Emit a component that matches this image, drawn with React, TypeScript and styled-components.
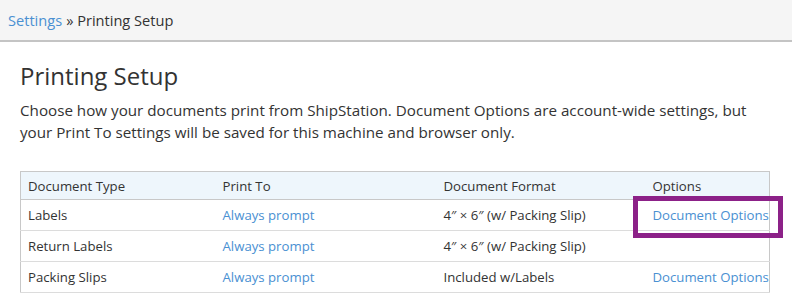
import styled, { createGlobalStyle } from 'styled-components';

const GlobalStyle = createGlobalStyle`
  body {
    margin: 0;
    background: #fff;
    font-family: "Open Sans", Lato, Arial, sans-serif;
    color: #333;
  }
`;

const rows = [
  { type: 'Labels', printTo: 'Always prompt', format: '4″ × 6″ (w/ Packing Slip)', options: true, highlight: true },
  { type: 'Return Labels', printTo: 'Always prompt', format: '4″ × 6″ (w/ Packing Slip)', options: false, highlight: false },
  { type: 'Packing Slips', printTo: 'Always prompt', format: 'Included w/Labels', options: true, highlight: false },
];

const App = () => {
  return (
    <Page>
      <GlobalStyle />
      <Breadcrumb>
        <Link href="#">Settings</Link>
        <Crumb>» Printing Setup</Crumb>
      </Breadcrumb>
      <Content>
        <Title>Printing Setup</Title>
        <Intro>
          Choose how your documents print from ShipStation. Document Options are account-wide settings, but
          your Print To settings will be saved for this machine and browser only.
        </Intro>
        <Table>
          <colgroup>
            <col style={{ width: 195 }} />
            <col style={{ width: 221 }} />
            <col style={{ width: 209 }} />
            <col style={{ width: 124 }} />
          </colgroup>
          <thead>
            <tr>
              <HeadCell>Document Type</HeadCell>
              <HeadCell>Print To</HeadCell>
              <HeadCell>Document Format</HeadCell>
              <HeadCell>Options</HeadCell>
            </tr>
          </thead>
          <tbody>
            {rows.map((r) => (
              <tr key={r.type}>
                <Cell>{r.type}</Cell>
                <Cell>
                  <Link href="#">{r.printTo}</Link>
                </Cell>
                <Cell>{r.format}</Cell>
                <Cell $marked={r.highlight}>
                  {r.options && <Link href="#">Document Options</Link>}
                  {r.highlight && <Highlight />}
                </Cell>
              </tr>
            ))}
          </tbody>
        </Table>
      </Content>
    </Page>
  );
};

export default App;

const Page = styled.div`
  width: 792px;
  height: 293px;
  overflow: hidden;
`;

const Breadcrumb = styled.div`
  height: 42px;
  box-sizing: border-box;
  padding: 0 8px;
  display: flex;
  align-items: center;
  gap: 4px;
  background: #f5f5f5;
  border-bottom: 2px solid #c4c4c4;
  font-size: 14.6px;
`;

const Crumb = styled.span`
  color: #333;
`;

const Link = styled.a`
  color: #4a90d2;
  text-decoration: none;
`;

const Content = styled.div`
  padding: 18px 20px 0 20px;
`;

const Title = styled.h1`
  margin: 0;
  font-size: 24px;
  font-weight: 400;
  line-height: 32px;
  color: #333;
`;

const Intro = styled.p`
  margin: 7px 0 0 0;
  font-size: 15.2px;
  line-height: 22px;
  width: 728px;
  color: #333;
`;

const Table = styled.table`
  margin-top: 28px;
  width: 750px;
  table-layout: fixed;
  border-collapse: collapse;
  border: 1px solid #c8c8c8;
  font-size: 13.2px;
`;

const HeadCell = styled.th`
  text-align: left;
  font-weight: 400;
  height: 27px;
  padding: 0 7px;
  background: #eef6fc;
  border-bottom: 1px solid #c8c8c8;
  color: #333;
`;

const Cell = styled.td<{ $marked?: boolean }>`
  position: ${(p) => (p.$marked ? 'relative' : 'static')};
  height: 30px;
  padding: 0 7px;
  border-bottom: 1px solid #dcdcdc;
  white-space: nowrap;
  color: #333;
`;

const Highlight = styled.div`
  position: absolute;
  left: -13px;
  right: -14px;
  top: -4px;
  bottom: -8px;
  border: 5px solid #8c2188;
  pointer-events: none;
`;
